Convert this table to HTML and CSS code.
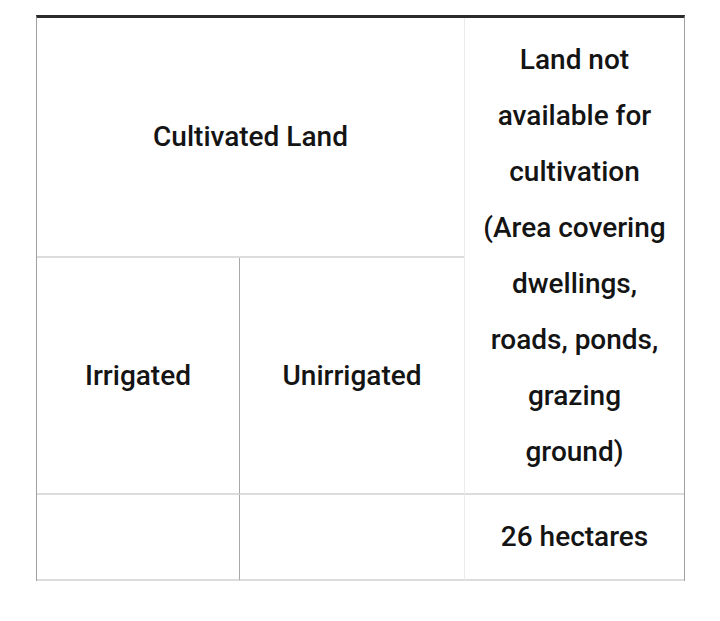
FILE: index.html
```html
<!DOCTYPE html>
<html>
<head>
<meta charset="utf-8">
<link rel="stylesheet" href="styles.css">
</head>
<body>
<div class="land-table">
  <div class="cell span2 r1">Cultivated Land</div>
  <div class="cell col3 tall">Land not available for cultivation (Area covering dwellings, roads, ponds, grazing ground)</div>
  <div class="cell col1 r2">Irrigated</div>
  <div class="cell col2 r2">Unirrigated</div>
  <div class="cell col1 r3"></div>
  <div class="cell col2 r3"></div>
  <div class="cell col3 r3">26 hectares</div>
</div>
</body>
</html>
```
FILE: styles.css
```css
html, body {
  margin: 0;
  padding: 0;
  background: #fff;
}
body {
  padding: 15px 0 0 36px;
  font-family: Roboto, "Noto Sans", sans-serif;
  font-weight: 500;
  font-size: 28px;
  color: #141414;
}
.land-table {
  display: grid;
  grid-template-columns: 203px 224px 220px;
  grid-template-rows: 240px 237px 86px;
  width: 649px;
  box-sizing: border-box;
  border-top: 3px solid #2b2b2b;
  border-left: 1px solid #a0a0a0;
  border-right: 1px solid #a0a0a0;
}
.cell {
  box-sizing: border-box;
  display: flex;
  align-items: center;
  justify-content: center;
  text-align: center;
  line-height: 56px;
  border-bottom: 2px solid #dcdcdc;
}
.span2 {
  grid-column: 1 / 3;
  grid-row: 1;
}
.tall {
  grid-column: 3;
  grid-row: 1 / 3;
  padding: 0 15px;
}
.col1 {
  grid-column: 1;
  border-right: 1px solid #a8a8a8;
}
.col2 {
  grid-column: 2;
}
.col3 {
  grid-column: 3;
  border-left: 1px solid #ececec;
}
.r2 { grid-row: 2; }
.r3 { grid-row: 3; }
```
